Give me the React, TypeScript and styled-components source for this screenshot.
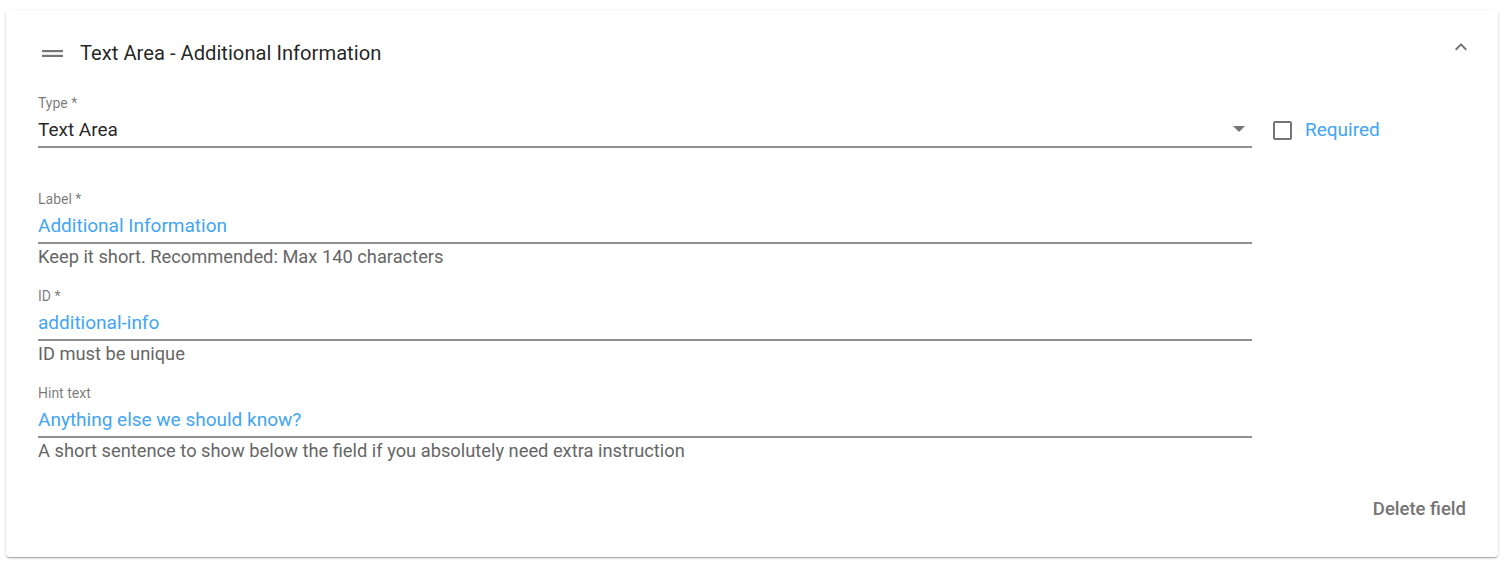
import React from "react";
import styled, { createGlobalStyle } from "styled-components";

const GlobalStyle = createGlobalStyle`
  html, body {
    margin: 0;
    padding: 0;
    background: #ffffff;
    font-family: Roboto, "Liberation Sans", Arial, sans-serif;
    -webkit-font-smoothing: antialiased;
  }
`;

const Page = styled.div`
  padding: 10px 8px 5px 6px;
`;

const Card = styled.section`
  background: #fff;
  border-radius: 4px;
  box-shadow: 0 1px 3px rgba(0, 0, 0, 0.2), 0 1px 1px rgba(0, 0, 0, 0.14),
    0 2px 1px -1px rgba(0, 0, 0, 0.12);
  padding: 0 32px 37px 32px;
`;

const Header = styled.div`
  display: flex;
  align-items: center;
  padding: 31px 0 0 4px;
  margin-bottom: 30px;
  height: 24px;
`;

const DragHandle = styled.svg`
  width: 21px;
  height: 7px;
  margin-right: 17px;
  flex-shrink: 0;
`;

const Title = styled.h2`
  flex: 1;
  margin: 0;
  font-size: 20.2px;
  line-height: 24px;
  font-weight: 400;
  color: rgba(0, 0, 0, 0.87);
`;

const CollapseButton = styled.button`
  border: 0;
  background: none;
  padding: 0;
  width: 24px;
  height: 24px;
  margin-right: -7px;
  margin-top: -12px;
  display: flex;
  align-items: center;
  justify-content: center;
  cursor: pointer;
  svg {
    width: 24px;
    height: 24px;
    fill: #757575;
  }
`;

const Body = styled.div`
  display: grid;
  grid-template-columns: 1fr 214px;
  align-items: start;
`;

const Field = styled.div<{ $gap: number }>`
  grid-column: 1;
  display: flex;
  flex-direction: column;
  margin-bottom: ${(p) => p.$gap}px;
`;

const Label = styled.label`
  font-size: 14px;
  line-height: 16px;
  color: rgba(0, 0, 0, 0.54);
`;

const InputLine = styled.div`
  display: flex;
  align-items: center;
  padding: 7px 0 4px;
  border-bottom: 2px solid #8f8f8f;
`;

const Value = styled.div<{ $accent?: boolean }>`
  flex: 1;
  font-size: 19px;
  line-height: 24px;
  color: ${(p) => (p.$accent ? "#42a5f5" : "rgba(0, 0, 0, 0.87)")};
`;

const DropArrow = styled.span`
  width: 0;
  height: 0;
  border-left: 6px solid transparent;
  border-right: 6px solid transparent;
  border-top: 6px solid #757575;
  margin-right: 7px;
  margin-top: -3px;
`;

const Helper = styled.div`
  margin-top: 2px;
  font-size: 18.3px;
  line-height: 22px;
  color: #666;
`;

const Aside = styled.div`
  grid-column: 2;
  display: flex;
  align-items: center;
  padding: 24px 0 0 21px;
`;

const CheckBox = styled.span`
  width: 15px;
  height: 15px;
  border: 2px solid #757575;
  border-radius: 2px;
  margin-right: 13px;
`;

const CheckLabel = styled.span`
  font-size: 19px;
  line-height: 22px;
  color: #42a5f5;
`;

const Footer = styled.div`
  display: flex;
  justify-content: flex-end;
  margin-top: 36px;
`;

const TextButton = styled.button`
  border: 0;
  background: none;
  padding: 0;
  font-family: inherit;
  font-size: 18.5px;
  line-height: 22px;
  font-weight: 500;
  color: #757575;
  cursor: pointer;
`;

const fields = [
  {
    label: "Label *",
    value: "Additional Information",
    helper: "Keep it short. Recommended: Max 140 characters",
  },
  { label: "ID *", value: "additional-info", helper: "ID must be unique" },
  {
    label: "Hint text",
    value: "Anything else we should know?",
    helper: "A short sentence to show below the field if you absolutely need extra instruction",
  },
];

export default function App() {
  return (
    <Page>
      <GlobalStyle />
      <Card>
        <Header>
          <DragHandle viewBox="0 0 21 7">
            <rect x="0" y="0" width="21" height="2.2" fill="#757575" />
            <rect x="0" y="4.8" width="21" height="2.2" fill="#757575" />
          </DragHandle>
          <Title>Text Area - Additional Information</Title>
          <CollapseButton aria-label="Collapse">
            <svg viewBox="0 0 24 24">
              <path d="M7.41 15.41 12 10.83l4.59 4.58L18 14l-6-6-6 6z" />
            </svg>
          </CollapseButton>
        </Header>

        <Body>
          <Field $gap={43}>
            <Label>Type *</Label>
            <InputLine>
              <Value>Text Area</Value>
              <DropArrow />
            </InputLine>
          </Field>
          <Aside>
            <CheckBox />
            <CheckLabel>Required</CheckLabel>
          </Aside>

          {fields.map((f, i) => (
            <Field key={f.label} $gap={i < fields.length - 1 ? 20 : 0}>
              <Label>{f.label}</Label>
              <InputLine>
                <Value $accent>{f.value}</Value>
              </InputLine>
              <Helper>{f.helper}</Helper>
            </Field>
          ))}
        </Body>

        <Footer>
          <TextButton>Delete field</TextButton>
        </Footer>
      </Card>
    </Page>
  );
}
